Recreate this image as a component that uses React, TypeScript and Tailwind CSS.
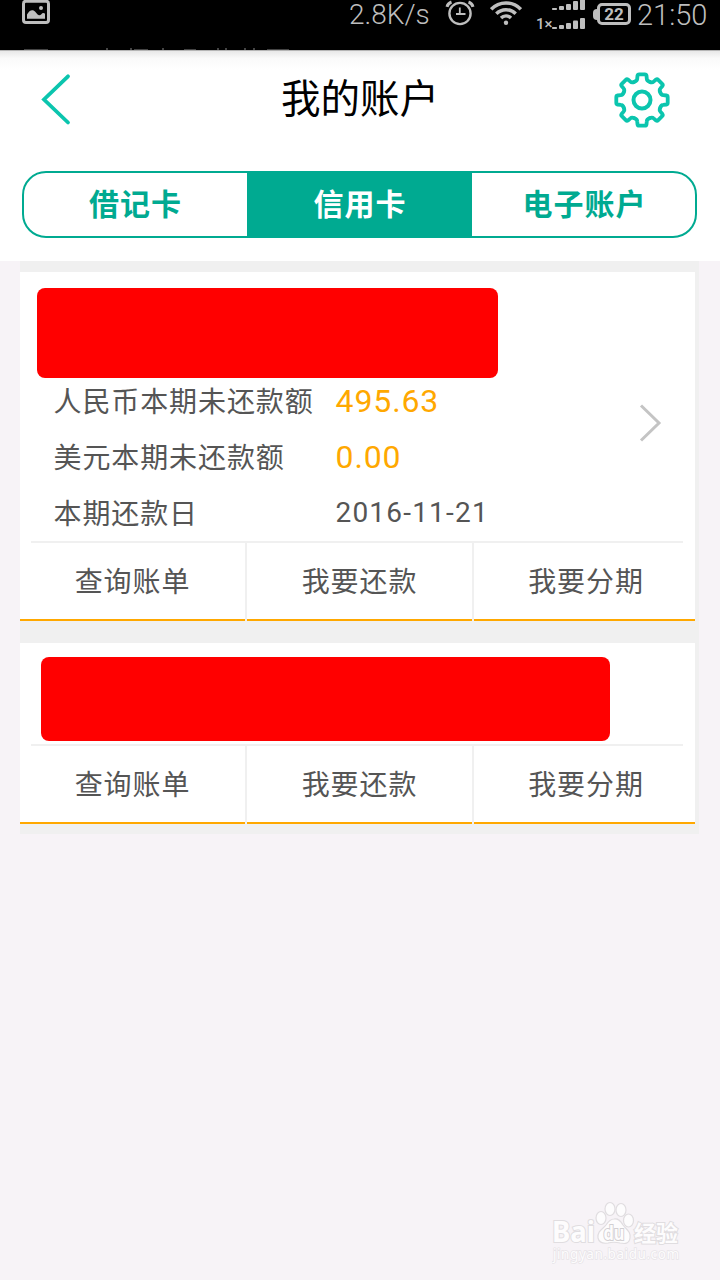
import React from 'react';

const GEAR_ANGLES = [0, 45, 90, 135, 180, 225, 270, 315];
const ACTIONS = ['查询账单', '我要还款', '我要分期'];

const ImageIcon: React.FC = () => (
  <svg className="w-7 h-6" viewBox="0 0 28 24" fill="none">
    <rect x="1.5" y="1.2" width="25" height="21.3" rx="2.5" stroke="#bebebe" strokeWidth="3" />
    <path d="M5 18.8v-4.3c2-3.5 4.2-5 6.6-4 2 .9 3.5 4.4 5.4 4.8 2 .3 2.6-2.3 4.3-2.3.8 0 1.3.3 1.7.8v5z" fill="#bebebe" />
    <circle cx="19" cy="8" r="2" fill="#bebebe" />
  </svg>
);

const AlarmIcon: React.FC = () => (
  <svg className="w-[30px] h-[26px]" viewBox="0 0 30 26" fill="none" stroke="#bebebe">
    <circle cx="15" cy="13.5" r="10.6" strokeWidth="2.4" />
    <path d="M14.8 7.5v6.5M11 14h9.5" strokeWidth="1.8" />
    <path d="M2 6.8c.6-2.3 2-4 4.5-4.8M28 6.8c-.6-2.3-2-4-4.5-4.8" strokeWidth="3" />
  </svg>
);

const WifiIcon: React.FC = () => (
  <svg className="w-8 h-[25px]" viewBox="0 0 32 25" fill="none" stroke="#bebebe" strokeWidth="3.4">
    <path d="M1.2 9.3a20.500 20.500 0 0 1 29.6 0M6.3 13.8a13.500 13.500 0 0 1 19.4 0M11 18a7 7 0 0 1 10 0" />
    <circle cx="16" cy="22.7" r="2.2" fill="#bebebe" stroke="none" />
  </svg>
);

const SignalIcon: React.FC = () => (
  <svg className="w-[34px] h-[30px]" viewBox="0 0 34 30" fill="#bebebe">
    <rect x="0" y="8" width="5" height="2" rx=".8" />
    <rect x="7" y="6" width="5" height="4" rx="1" />
    <rect x="14" y="4" width="5" height="6" rx="1" />
    <rect x="21" y="1" width="5" height="9" rx="1" />
    <rect x="28" y="-2" width="5" height="12" rx="1" />
    <rect x="0" y="27" width="5" height="2" rx=".8" />
    <rect x="7" y="25" width="5" height="4" rx="1" />
    <rect x="14" y="23" width="5" height="6" rx="1" />
    <rect x="21" y="20.5" width="5" height="8.5" rx="1" />
    <rect x="28" y="18" width="5" height="11" rx="1" />
  </svg>
);

const GearIcon: React.FC = () => (
  <svg className="w-14 h-14" viewBox="-28 -28 56 56" fill="none" stroke="#0bc5ae" strokeWidth="3.8" strokeLinejoin="round" strokeLinecap="round">
    {GEAR_ANGLES.map((angle) => (
      <path
        key={angle}
        transform={`rotate(${angle})`}
        d="M-7.6-18.3Q-4.9-19.2-4.8-21.2L-4.5-24.4Q-4.3-25.7-2.8-25.7H2.8Q4.3-25.7 4.5-24.4L4.8-21.2Q4.9-19.2 7.6-18.3"
      />
    ))}
    <circle r="8.5" strokeWidth="4" />
  </svg>
);

const StatusBar: React.FC = () => (
  <div className="relative h-[50px] bg-black text-[#bebebe] font-[Roboto,sans-serif] font-light overflow-hidden">
    <div className="flex items-start pl-[22px] pr-3 h-[30px]">
      <ImageIcon />
      <span className="ml-[299px] w-24 text-[28px] leading-[29px] whitespace-nowrap">2.8K/s</span>
      <AlarmIcon />
      <span className="ml-[15px]"><WifiIcon /></span>
      <span className="ml-[14px] w-4 pt-[15px] text-[15px] leading-[18px] font-medium">1×</span>
      <SignalIcon />
      <span className="ml-[7px] mt-[3px] flex items-center shrink-0">
        <span className="w-1 h-[11px] rounded-l-sm bg-[#bebebe]" />
        <span className="flex items-center justify-center w-[34px] h-[22px] border-3 border-[#bebebe] rounded-[5px] text-[17px] leading-none font-bold">22</span>
      </span>
      <span className="ml-1.5 pt-px text-[29px] leading-[29px]">21:50</span>
    </div>
    <svg className="absolute left-0 bottom-0 w-[300px] h-[2px]" viewBox="0 0 300 2" fill="#444">
      <path d="M24 1h24v1H24zM106 0h2v2h-2zM130 0h2v2h-2zM134 1h14v1h-14zM162 0h2v2h-2zM184 1h12v1h-12zM217 0h2v2h-2zM225 0h2v2h-2zM244 0h2v2h-2zM253 0h2v2h-2zM267 1h22v1h-22z" />
    </svg>
  </div>
);

const Header: React.FC = () => (
  <header className="h-[211px] bg-white">
    <div className="h-px bg-[#b5b5b5]" />
    <div className="h-[120px] bg-linear-to-b from-[#e8e8e8] from-0% via-[#fafafa] via-6% to-white to-16% flex items-start justify-between pl-[41px] pr-[50px] pt-[21px]">
      <svg className="w-[30px] h-14" viewBox="0 0 30 56" fill="none" stroke="#0bc5ae" strokeWidth="3.8" strokeLinecap="round">
        <path d="M27 4.3 3 27.5 27 50.5" />
      </svg>
      <h1 className="ml-[35px] text-[39.5px] leading-14 text-black whitespace-nowrap">我的账户</h1>
      <GearIcon />
    </div>
    <div className="mx-[22px] w-[675px] h-[67px] flex border-2 border-[#00aa91] rounded-[24px] overflow-hidden text-[30px] font-bold tracking-[1px] leading-[63px] text-center text-[#00aa91]">
      <div className="w-[223px]">借记卡</div>
      <div className="w-[225px] bg-[#00aa91] text-white pl-px">信用卡</div>
      <div className="w-[223px] pl-0.5">电子账户</div>
    </div>
  </header>
);

const CardActions: React.FC = () => (
  <div>
    <div className="ml-[11px] mr-3 h-0.5 bg-[#f0f0f0]" />
    <div className="flex h-[78px] gap-0.5 bg-[#f0f0f0] text-center leading-20">
      {ACTIONS.map((label) => (
        <div key={label} className="w-[225px] last:w-[221px] last:pl-[3px] h-[78px] bg-white border-b-2 border-[#ffa800]">
          {label}
        </div>
      ))}
    </div>
  </div>
);

const Row: React.FC<{ label: string; children: React.ReactNode }> = ({ label, children }) => (
  <div className="flex h-[46px] leading-[46px]">
    <span className="w-[282px] pt-0.5">{label}</span>
    {children}
  </div>
);

const Watermark: React.FC = () => (
  <div className="absolute left-[552px] top-[1200px] w-[130px] h-[66px] font-['Noto_Sans','Noto_Sans_CJK_SC',sans-serif]">
    <svg className="w-[130px] h-[66px]" viewBox="0 0 130 66" fill="#fdfcfd" stroke="#e0dde0" strokeWidth="1.2">
      <ellipse cx="49" cy="18" rx="5" ry="6.5" />
      <ellipse cx="58" cy="9" rx="5" ry="6.5" />
      <ellipse cx="69" cy="10" rx="5" ry="6.5" />
      <ellipse cx="76.5" cy="20.5" rx="5" ry="6.5" />
      <path d="M62 19c5-1 7 3 9 6 4 5 8 7 7 13-1 6-5 6-10 5-4-1-8-1-12 0-6 1-9-1-10-5-1-7 5-9 8-13 2-3 4-6 8-6z" />
      <g fontWeight="700" paintOrder="stroke" strokeWidth="2">
        <text x="0" y="42" fontSize="28" textLength="43" lengthAdjust="spacingAndGlyphs">Bai</text>
        <text x="51.5" y="40" fontSize="19" textLength="21" lengthAdjust="spacingAndGlyphs" stroke="#d2cfd2">du</text>
        <text x="82" y="41" fontSize="22">经验</text>
      </g>
      <text x="1" y="59" fontSize="13.5" textLength="126" paintOrder="stroke" stroke="#e7e4e7" strokeWidth="1.5">jingyan.baidu.com</text>
    </svg>
  </div>
);

export default function App() {
  return (
    <div className="relative w-[720px] h-[1280px] overflow-hidden bg-[#f7f3f7] font-[Roboto,'Noto_Sans_CJK_SC',sans-serif]">
      <StatusBar />
      <Header />
      <main className="ml-5 w-[679px] h-[573px] pt-[11px] pr-1 bg-[#f0f0f0] text-[28px] tracking-[0.9px] text-[#555]">
        <section className="h-[349px] bg-white">
          <div className="h-[269px] pt-4">
            <div className="ml-[17px] w-[461px] h-[90px] rounded-lg bg-[#f00]" />
            <div className="flex items-center justify-between pl-[33.5px] pr-[33px]">
              <div className="flex flex-col gap-2.5">
                <Row label="人民币本期未还款额">
                  <span className="text-[32px] text-[#ffa800]">495.63</span>
                </Row>
                <Row label="美元本期未还款额">
                  <span className="text-[32px] text-[#ffa800]">0.00</span>
                </Row>
                <Row label="本期还款日">
                  <span className="tracking-[1.2px]">2016-11-21</span>
                </Row>
              </div>
              <svg className="w-[23px] h-10 -mt-[68px]" viewBox="0 0 23 40" fill="none" stroke="#c4c4c4" strokeWidth="3">
                <path d="M2 2.5 20 20 2 37.5" />
              </svg>
            </div>
          </div>
          <CardActions />
        </section>
        <section className="mt-[22px] h-[181px] bg-white">
          <div className="h-[101px] pt-3.5">
            <div className="ml-[21px] w-[569px] h-[84px] rounded-lg bg-[#f00]" />
          </div>
          <CardActions />
        </section>
      </main>
      <Watermark />
    </div>
  );
}
